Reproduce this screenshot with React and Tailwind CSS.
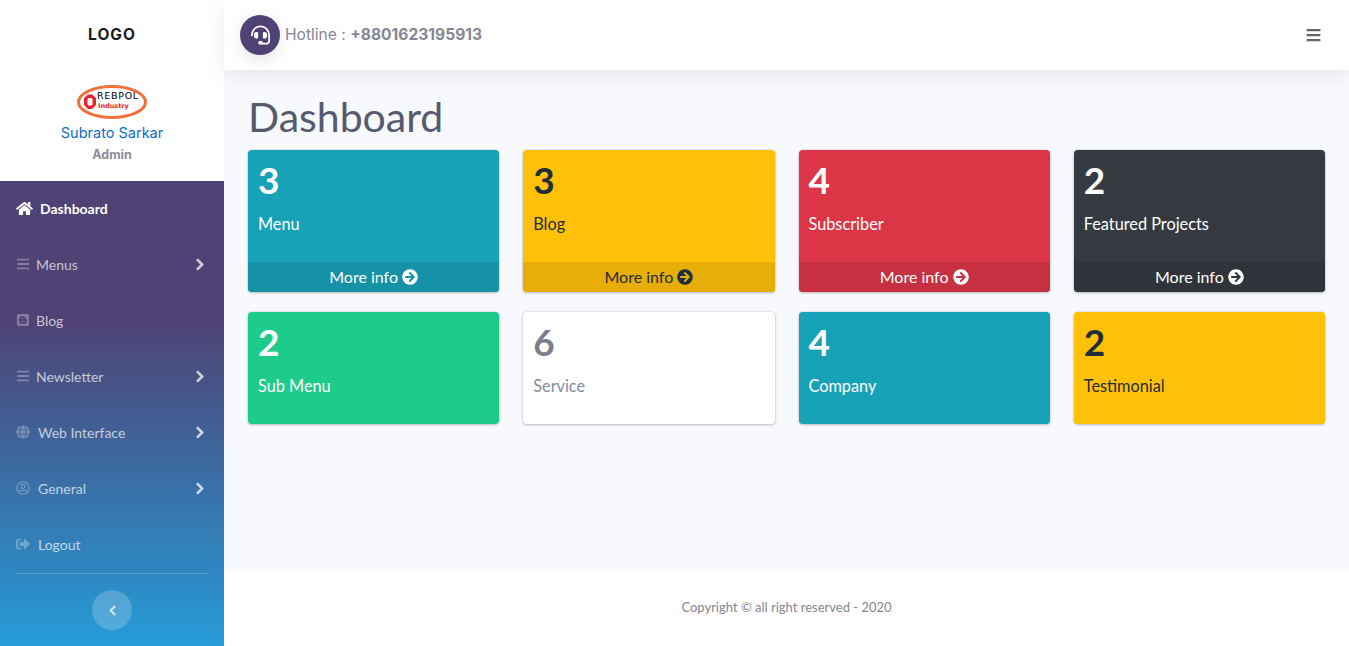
import React from "react";
import { FaHome, FaBars, FaChevronRight, FaChevronLeft, FaBlogger, FaGlobe, FaRegUserCircle, FaSignOutAlt, FaArrowCircleRight, FaHeadset } from "react-icons/fa";

const nav = [
  { label: "Menus", Icon: FaBars, chev: true, gap: "gap-[6px]" },
  { label: "Blog", Icon: FaBlogger, gap: "gap-[6px]" },
  { label: "Newsletter", Icon: FaBars, chev: true, gap: "gap-[6px]" },
  { label: "Web Interface", Icon: FaGlobe, chev: true, gap: "gap-[8px]" },
  { label: "General", Icon: FaRegUserCircle, chev: true, gap: "gap-[8px]" },
  { label: "Logout", Icon: FaSignOutAlt, gap: "gap-[8px]" },
];

const top = [
  { n: 3, t: "Menu", bg: "bg-[#17a2b8]", fg: "text-white", foot: "bg-[#1592a6]" },
  { n: 3, t: "Blog", bg: "bg-[#ffc107]", fg: "text-[#1f2d3d]", foot: "bg-[#e6ae06]" },
  { n: 4, t: "Subscriber", bg: "bg-[#dc3545]", fg: "text-white", foot: "bg-[#c63040]" },
  { n: 2, t: "Featured Projects", bg: "bg-[#343a40]", fg: "text-white", foot: "bg-[#2f343a]" },
];
const bottom = [
  { n: 2, t: "Sub Menu", bg: "bg-[#1dcb8a]", fg: "text-white" },
  { n: 6, t: "Service", bg: "bg-white", fg: "text-[#868e96]", num: "text-[#7d7d8c]" },
  { n: 4, t: "Company", bg: "bg-[#17a2b8]", fg: "text-white" },
  { n: 2, t: "Testimonial", bg: "bg-[#ffc107]", fg: "text-[#1f2d3d]" },
];

function Card({ c }) {
  return (
    <div className={`${c.bg} ${c.fg} rounded-[4px] shadow-[0_0_2px_rgba(0,0,0,0.18),0_1px_3px_rgba(0,0,0,0.2)] overflow-hidden flex flex-col`}>
      <div className="h-[112px] px-[10px] pt-[8px]">
        <div className={`text-[37px] leading-[43px] font-bold ${c.num || ""}`}>{c.n}</div>
        <div className="mt-[11px] text-[16.3px] leading-[24px]">{c.t}</div>
      </div>
      {c.foot && (
        <div className={`${c.foot} h-[30px] pb-[1px] flex items-center justify-center gap-[4px] text-[16px]`}>
          <span>More info</span>
          <FaArrowCircleRight className="w-[16px] h-[16px]" />
        </div>
      )}
    </div>
  );
}

export default function App() {
  return (
    <div className="flex w-[1349px] h-[646px] overflow-hidden bg-white font-['Lato',sans-serif]">
      <aside className="w-[224px] shrink-0 flex flex-col">
        <div className="h-[181px] bg-white flex flex-col items-center">
          <div className="h-[70px] flex items-center justify-center font-['Inter',sans-serif] text-[15.5px] font-bold tracking-[1px] text-[#1a1a1a]">LOGO</div>
          <svg width="72" height="36" viewBox="0 0 72 36" className="mt-[15px] block">
            <ellipse cx="36" cy="17" rx="33.5" ry="15.5" fill="#fff" stroke="#f2703a" strokeWidth="3" />
            <path d="M8 13 L12 9.5 H16 L20 13 V20 L16 24 H12 L8 20 Z M11.5 14 V19.5 L12.5 20.5 H15.5 L16.5 19.5 V14 L15.5 13 H12.5 Z" fill="#e8202f" fillRule="evenodd" />
            <text x="21" y="14" fontSize="9.5" fontFamily="DejaVu Sans" letterSpacing="0.7" fill="#000">REBPOL</text>
            <text x="22" y="23" fontSize="6.5" fontFamily="DejaVu Sans" fontWeight="bold" fill="#ee1c25">Industry</text>
          </svg>
          <div className="mt-[1px] text-[14.5px] leading-[22px] text-[#0b6fc9] font-['Inter',sans-serif]">Subrato Sarkar</div>
          <div className="mt-[1px] text-[12.5px] leading-[20px] font-bold text-[#8c8c99] font-['Inter',sans-serif]">Admin</div>
        </div>
        <nav className="flex-1 flex flex-col px-[16px] bg-[linear-gradient(to_bottom,#4f4274_0%,#4f4274_30%,#259cd9_100%)]">
          <div className="h-[56px] pb-[2px] flex items-center gap-[7px] text-white text-[14px] font-bold">
            <FaHome className="w-[17px] h-[15px]" />
            <span>Dashboard</span>
          </div>
          {nav.map(({ label, Icon, chev, gap }) => (
            <div key={label} className="h-[56px] pb-[2px] flex items-center justify-between text-white/70 text-[14px]">
              <div className={`flex items-center ${gap}`}>
                <Icon className="w-[14px] h-[14px] text-white/30" />
                <span>{label}</span>
              </div>
              {chev && <FaChevronRight className="w-[10px] h-[13px] mr-[3px] text-white/70 stroke-[30px]" />}
            </div>
          ))}
          <div className="border-t border-white/20 flex justify-center pt-[16px]">
            <div className="w-[40px] h-[40px] rounded-full bg-white/20 flex items-center justify-center">
              <FaChevronLeft className="w-[9px] h-[11px] text-white/70 stroke-[30px]" />
            </div>
          </div>
        </nav>
      </aside>
      <main className="flex-1 flex flex-col min-w-0">
        <header className="h-[70px] bg-white flex items-center justify-between pl-[16px] pr-[27px] relative z-10 shadow-[0_5px_20px_rgba(0,0,0,0.08)]">
          <div className="flex items-center gap-[5px]">
            <div className="w-[40px] h-[40px] rounded-full bg-[#4f4274] flex items-center justify-center shadow-[0_5px_15px_rgba(0,0,0,0.1)]">
              <FaHeadset className="w-[19px] h-[20px] text-white" />
            </div>
            <span className="text-[15.6px] text-[#868694] font-['Inter',sans-serif]">Hotline : <b className="font-bold">+8801623195913</b></span>
          </div>
          <FaBars className="w-[15px] h-[16px] text-[#666] mr-[1px]" />
        </header>
        <section className="flex-1 bg-[#f8f9fc] px-[24px] pt-[22px]">
          <h1 className="text-[41px] leading-[49px] text-[#555a6e] font-normal mb-[9px]">Dashboard</h1>
          <div className="grid grid-cols-4 gap-x-[24px] gap-y-[20px]">
            {top.map((c) => <Card key={c.t} c={c} />)}
            {bottom.map((c) => <Card key={c.t} c={c} />)}
          </div>
        </section>
        <footer className="h-[77px] bg-white flex items-center justify-center text-[13px] text-[#85858f]">
          Copyright © all right reserved - 2020
        </footer>
      </main>
    </div>
  );
}
